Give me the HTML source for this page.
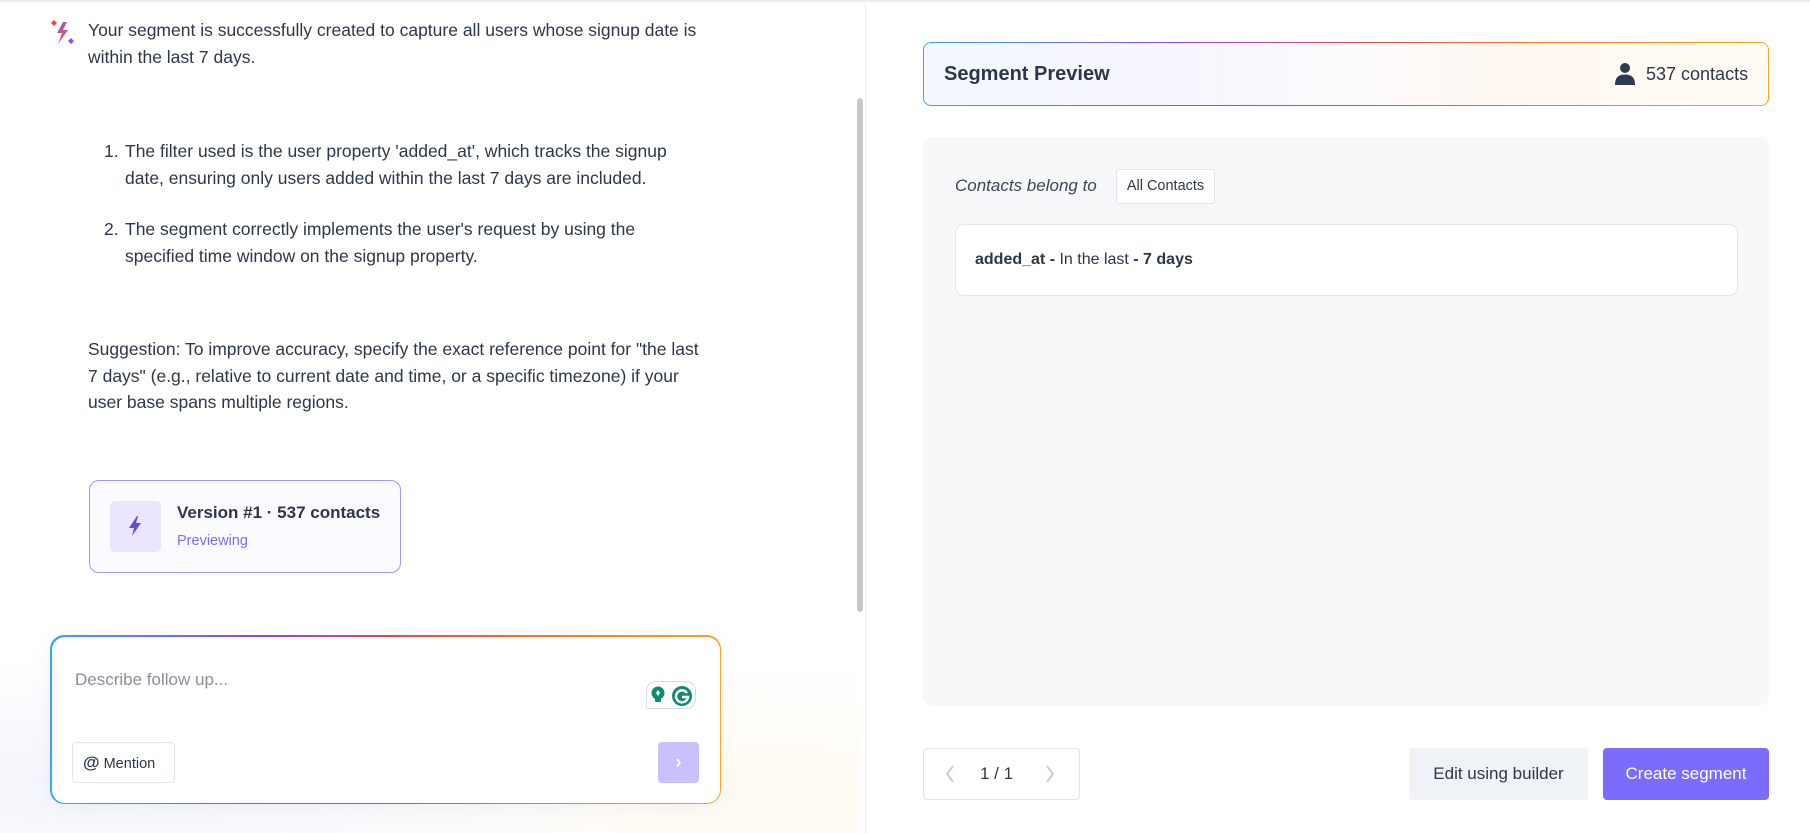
<!DOCTYPE html>
<html><head><meta charset="utf-8"><style>
*{box-sizing:border-box;margin:0;padding:0}
body{width:1810px;height:833px;overflow:hidden;background:#fff;font-family:"Liberation Sans",sans-serif;color:#2d3748;position:relative}
.abs{position:absolute}
.t{font-size:17.5px;line-height:26.5px;color:#2d3748;white-space:nowrap}
.grad{background:linear-gradient(90deg,#3ba4f0,#8a4fe0 30%,#d9485a 50%,#f57c1f 75%,#f5a623)}
</style></head><body>
<div class="abs" style="left:0;top:0;width:1810px;height:2px;background:#e8ebf0"></div>
<div class="abs" style="left:865px;top:0;width:1px;height:833px;background:#eceef2"></div>
<div class="abs" style="left:857px;top:98px;width:6px;height:514px;border-radius:3px;background:#c8c8c8"></div>
<div class="abs" style="left:0;top:600px;width:860px;height:233px;background:radial-gradient(ellipse at 10% 80%,#f3f6fc,transparent 50%),radial-gradient(ellipse at 90% 85%,#fffbf2,transparent 50%)"></div>

<svg class="abs" style="left:50px;top:19px" width="26" height="28" viewBox="0 0 26 28">
<defs><linearGradient id="g1" x1="0" y1="0" x2="1" y2="1"><stop offset="0" stop-color="#8b4ff0"/><stop offset="1" stop-color="#f26a1b"/></linearGradient></defs>
<path d="M4 1 L7 4 L4 7 L1 4Z" fill="#e8483f"/>
<path d="M13 3 L7 14 L12 14 L8 25 L18 11 L13 11 L17 3Z" fill="url(#g1)"/>
<path d="M21 19 L24 22 L21 25 L18 22Z" fill="#8b4ff0"/>
</svg>
<div class="abs t" style="left:88px;top:17px">Your segment is successfully created to capture all users whose signup date is<br>within the last 7 days.</div>
<div class="abs t" style="left:104px;top:138px">1.</div>
<div class="abs t" style="left:125px;top:138px">The filter used is the user property 'added_at', which tracks the signup<br>date, ensuring only users added within the last 7 days are included.</div>
<div class="abs t" style="left:104px;top:216px">2.</div>
<div class="abs t" style="left:125px;top:216px">The segment correctly implements the user's request by using the<br>specified time window on the signup property.</div>
<div class="abs t" style="left:88px;top:336px">Suggestion: To improve accuracy, specify the exact reference point for "the last<br>7 days" (e.g., relative to current date and time, or a specific timezone) if your<br>user base spans multiple regions.</div>

<div class="abs" style="left:89px;top:480px;width:312px;height:93px;border:1px solid #a794f5;border-radius:10px;background:#fbfaff"></div>
<div class="abs" style="left:110px;top:501px;width:51px;height:51px;border-radius:5px;background:#ebe6ff"></div>
<svg class="abs" style="left:126px;top:515px" width="18" height="22" viewBox="0 0 18 22"><path d="M11 1 L3 13 L8 13 L6 21 L15 8 L10 8 L12 1Z" fill="#6b46e0"/></svg>
<div class="abs" style="left:177px;top:503px;font-size:17px;font-weight:bold;color:#2d3748">Version #1 · 537 contacts</div>
<div class="abs" style="left:177px;top:533px;font-size:14.5px;color:#7c6ff5">Previewing</div>

<div class="abs grad" style="left:50px;top:635px;width:671px;height:169px;border-radius:14px;padding:1.5px;box-shadow:0 4px 20px rgba(120,120,180,0.08)"><div style="width:100%;height:100%;background:#fff;border-radius:13px"></div></div>
<div class="abs" style="left:75px;top:670px;font-size:17px;color:#8a8f98">Describe follow up...</div>
<div class="abs" style="left:646px;top:681px;width:50px;height:28px;border:1px solid #d5dde6;border-radius:10px 10px 10px 2px;background:#fff"></div>
<svg class="abs" style="left:650px;top:685px" width="44" height="22" viewBox="0 0 44 22">
<circle cx="8" cy="8" r="6.5" fill="#138a72"/><rect x="5" y="13" width="6" height="4" rx="1" fill="#138a72"/><path d="M8 5 L10 8 L8 11 L6 8Z" fill="#fff"/>
<circle cx="32" cy="11" r="10" fill="#138a72"/><path d="M37 8 A6 6 0 1 0 38 12 L32 12" stroke="#fff" stroke-width="2.4" fill="none"/>
</svg>
<div class="abs" style="left:72px;top:742px;width:103px;height:41px;border:1px solid #e2e6ec;border-radius:4px;background:#fff;font-size:14.5px;line-height:39px;padding-left:10px;color:#2d3748"><b style="font-size:17px">@</b> Mention</div>
<div class="abs" style="left:658px;top:742px;width:41px;height:41px;border-radius:4px;background:#cbc0ff;color:#fff;text-align:center;line-height:40px;font-size:18px;font-weight:bold">›</div>

<div class="abs grad" style="left:923px;top:42px;width:846px;height:64px;border-radius:8px;padding:1.3px"><div style="width:100%;height:100%;border-radius:7px;background:linear-gradient(90deg,#f4f9ff,#f8f6ff 30%,#fdfbfd 50%,#fff8f0 70%,#fffcf6)"></div></div>
<div class="abs" style="left:944px;top:63px;font-size:20px;font-weight:bold;color:#2d3748">Segment Preview</div>
<svg class="abs" style="left:1614px;top:62px" width="22" height="24" viewBox="0 0 22 24"><circle cx="11" cy="6" r="5" fill="#2d3a52"/><path d="M1 23 C1 15 5 12.5 11 12.5 C17 12.5 21 15 21 23Z" fill="#2d3a52"/></svg>
<div class="abs" style="left:1646px;top:64px;font-size:18px;color:#2d3748">537 contacts</div>

<div class="abs" style="left:923px;top:137px;width:846px;height:569px;border-radius:10px;background:#f7f8fa"></div>
<div class="abs" style="left:955px;top:176px;font-size:17px;font-style:italic;color:#3d4657">Contacts belong to</div>
<div class="abs" style="left:1116px;top:169px;width:99px;height:35px;border:1px solid #e2e6ec;border-radius:3px;background:#fff;font-size:14.5px;line-height:33px;text-align:center;color:#2d3748">All Contacts</div>
<div class="abs" style="left:955px;top:224px;width:783px;height:72px;border:1px solid #e2e6ec;border-radius:9px;background:#fff"></div>
<div class="abs" style="left:975px;top:251px;font-size:16px;color:#2d3748"><b>added_at -</b> In the last <b>- 7 days</b></div>

<div class="abs" style="left:923px;top:748px;width:157px;height:52px;border:1px solid #e2e6ec;border-radius:4px;background:#fff"></div>
<svg class="abs" style="left:944px;top:764px" width="12" height="20" viewBox="0 0 12 20"><path d="M9 2 L3 10 L9 18" stroke="#c5ced8" stroke-width="2" fill="none"/></svg>
<div class="abs" style="left:980px;top:764px;font-size:17px;color:#2d3748">1 / 1</div>
<svg class="abs" style="left:1044px;top:764px" width="12" height="20" viewBox="0 0 12 20"><path d="M3 2 L9 10 L3 18" stroke="#c5ced8" stroke-width="2" fill="none"/></svg>
<div class="abs" style="left:1409px;top:748px;width:179px;height:52px;border-radius:4px;background:#eff2f7;font-size:17px;line-height:52px;text-align:center;color:#2d3748">Edit using builder</div>
<div class="abs" style="left:1603px;top:748px;width:166px;height:52px;border-radius:4px;background:#7b6cfb;font-size:17px;line-height:52px;text-align:center;color:#fff">Create segment</div>
</body></html>
